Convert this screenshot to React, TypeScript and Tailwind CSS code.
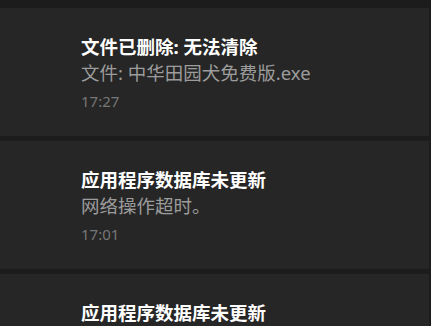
import React from 'react';

type Notice = { title: string; body: string; time: string };

const NOTICES: Notice[] = [
  { title: '文件已删除: 无法清除', body: '文件: 中华田园犬免费版.exe', time: '17:27' },
  { title: '应用程序数据库未更新', body: '网络操作超时。', time: '17:01' },
  { title: '应用程序数据库未更新', body: '网络操作超时。', time: '16:48' },
];

const FONT = { fontFamily: '"Noto Sans", "Noto Sans CJK SC", sans-serif' };

export default function App() {
  return (
    <div className="h-[326px] w-[431px] overflow-hidden bg-[#1c1c1c] pt-[8px] pr-[2px] flex flex-col gap-[5px]" style={FONT}>
      {NOTICES.map((n, i) => (
        <div key={i} className="h-[128px] shrink-0 bg-[#262626] pl-[81px] pt-[25px]">
          <div className="text-[18.5px] leading-[27px] font-bold text-white whitespace-nowrap">{n.title}</div>
          <div className="text-[18.5px] leading-[26px] text-[#9c9c9c] whitespace-nowrap">{n.body}</div>
          <div className="mt-[3px] text-[15px] leading-[24px] text-[#777777]">{n.time}</div>
        </div>
      ))}
    </div>
  );
}
